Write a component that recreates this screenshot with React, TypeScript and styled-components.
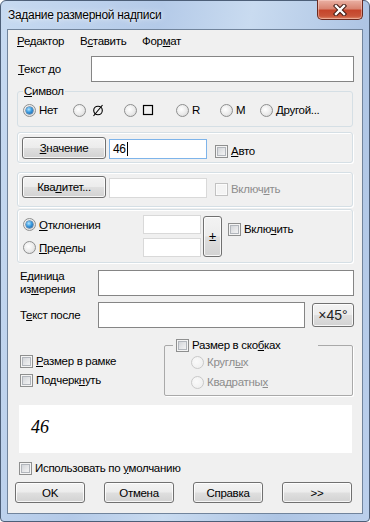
import React, { FC, ReactNode } from 'react';
import styled, { createGlobalStyle } from 'styled-components';

const FONT = `"Liberation Sans", Arial, sans-serif`;

const GlobalStyle = createGlobalStyle`
  html, body {
    margin: 0;
    padding: 0;
    background: #fff;
  }
  body {
    font-family: ${FONT};
    font-size: 11.5px;
    letter-spacing: -0.3px;
    color: #000;
  }
  * {
    box-sizing: border-box;
  }
`;

const Window = styled.div`
  width: 370px;
  height: 522px;
  display: flex;
  flex-direction: column;
  border: 1px solid #4d5f78;
  border-radius: 6px 6px 4px 4px;
  padding: 0 6px 7px 6px;
  background: linear-gradient(100deg, #c7daf1 0%, #b4cae8 35%, #c9dbf0 55%, #aec5e4 80%, #bcd0ec 100%);
`;

const TitleBar = styled.div`
  height: 28px;
  display: flex;
  align-items: flex-start;
  justify-content: space-between;
`;

const Title = styled.div`
  margin: 6px 0 0 1px;
  line-height: 16px;
  font-size: 12px;
  text-shadow: 0 0 6px rgba(255, 255, 255, 0.9), 0 0 2px rgba(255, 255, 255, 0.9);
`;

const CloseButton = styled.div`
  width: 46px;
  height: 20px;
  margin-top: -1px;
  display: flex;
  align-items: center;
  justify-content: center;
  border: 1px solid #6b2a1f;
  border-top: none;
  border-radius: 0 0 5px 5px;
  background: linear-gradient(to bottom, #eab1a4 0%, #d98572 45%, #c5452b 55%, #c9553a 85%, #e08a6a 100%);
  box-shadow: inset 0 0 0 1px rgba(255, 220, 210, 0.45);
`;

const Client = styled.div`
  flex: 1;
  display: flex;
  flex-direction: column;
  border: 1px solid #71849c;
  background: #f0f0f0;
`;

const MenuBar = styled.div`
  height: 22px;
  display: flex;
  padding: 3px 0 0 9px;
  line-height: 16px;
`;

const MenuItem = styled.span<{ $w: number }>`
  width: ${p => p.$w}px;
`;

const Content = styled.div`
  display: flex;
  flex-direction: column;
  padding: 4px 9px 0 9px;
`;

const FieldRow = styled.div<{ $mt: number; $labelW: number }>`
  display: flex;
  align-items: center;
  margin-top: ${p => p.$mt}px;

  & > label {
    width: ${p => p.$labelW}px;
    flex: none;
    padding-left: ${p => (p.$labelW > 76 ? 3 : 1)}px;
    line-height: 13px;
  }
`;

const TextBox = styled.div<{ $tone?: 'dark' | 'focus' | 'light'; $h?: number; $w?: number }>`
  height: ${p => p.$h ?? 26}px;
  ${p => (p.$w ? `width: ${p.$w}px; flex: none;` : 'flex: 1;')}
  display: flex;
  align-items: center;
  padding-left: 3px;
  background: #fff;
  font-size: 12px;
  border: 1px solid
    ${p => (p.$tone === 'focus' ? '#7eb4ea' : p.$tone === 'light' ? '#d9d9d9' : '#858585')};
`;

const Caret = styled.span`
  width: 1px;
  height: 14px;
  margin-left: 1px;
  background: #000;
`;

const GroupBox = styled.fieldset<{ $mt: number }>`
  margin: ${p => p.$mt}px 0 0 0;
  padding: 4px 5px 8px 5px;
  min-inline-size: auto;
  border: 1px solid #d5dfe5;
  border-radius: 3px;

  & > legend {
    padding: 0 1px;
    line-height: 14px;
  }
`;

const Panel = styled.div<{ $mt: number; $pt: number; $pb: number }>`
  display: flex;
  align-items: flex-end;
  margin-top: ${p => p.$mt}px;
  padding: ${p => p.$pt}px 4px ${p => p.$pb}px 4px;
  border: 1px solid #d5dfe5;
  border-radius: 3px;
  box-shadow: inset 1px 1px 0 #fff, 1px 1px 0 #fff;
`;

const Button = styled.div<{ $w?: number; $h?: number; $size?: number }>`
  width: ${p => p.$w ?? 70}px;
  height: ${p => p.$h ?? 21}px;
  flex: none;
  display: flex;
  align-items: center;
  justify-content: center;
  font-size: ${p => p.$size ?? 11.5}px;
  border: 1px solid #707070;
  border-radius: 3px;
  background: linear-gradient(to bottom, #f3f3f3 0%, #ececec 48%, #dfdfdf 52%, #d2d2d2 100%);
  box-shadow: inset 0 0 0 1px rgba(255, 255, 255, 0.8);
`;

const Option = styled.label<{ $w?: number; $disabled?: boolean }>`
  display: flex;
  align-items: center;
  height: 16px;
  ${p => (p.$w ? `width: ${p.$w}px; flex: none;` : '')}
  color: ${p => (p.$disabled ? '#8d8d8d' : '#000')};
`;

const RadioMark = styled.span<{ $checked?: boolean; $disabled?: boolean }>`
  position: relative;
  flex: none;
  width: 13px;
  height: 13px;
  margin-right: 3px;
  border-radius: 50%;
  border: 1px solid ${p => (p.$disabled ? '#c9c9c9' : '#8e8f8f')};
  background: ${p =>
    p.$disabled
      ? 'radial-gradient(circle at 40% 40%, #fafafa 0%, #ececec 100%)'
      : 'radial-gradient(circle at 40% 40%, #ffffff 0%, #eaeaea 55%, #cfcfcf 100%)'};

  &::after {
    content: '';
    display: ${p => (p.$checked ? 'block' : 'none')};
    position: absolute;
    left: 2px;
    top: 2px;
    width: 7px;
    height: 7px;
    border-radius: 50%;
    background: radial-gradient(circle at 40% 35%, #b6e6ff 0%, #3a9be0 45%, #0f4f96 100%);
    box-shadow: 0 0 0 0.5px #1c4f80;
  }
`;

const CheckMark = styled.span<{ $disabled?: boolean }>`
  flex: none;
  width: 13px;
  height: 13px;
  margin-right: 3px;
  border: 1px solid ${p => (p.$disabled ? '#c2c2c2' : '#8e8f8f')};
  background: ${p =>
    p.$disabled ? '#f4f4f4' : 'linear-gradient(135deg, #c9cdd2 0%, #e6e7e9 55%, #fafafa 100%)'};
  box-shadow: ${p =>
    p.$disabled ? 'inset 0 0 0 1px #fbfbfb' : 'inset 0 0 0 1px #f4f4f4, inset 0 0 0 2px #b2b6bc'};
`;

const SymbolRow = styled.div`
  display: flex;
  align-items: center;
`;

const DevGrid = styled.div`
  display: grid;
  grid-template-columns: 120px 58px 21px auto;
  grid-template-rows: 19px 19px;
  row-gap: 4px;
  align-items: center;
`;

const PlusMinus = styled(Button)`
  grid-column: 3;
  grid-row: 1 / span 2;
  align-self: stretch;
  margin: 1px 0 0 2px;
  font-size: 13px;
`;

const DevCheck = styled.div`
  grid-column: 4;
  grid-row: 1;
  align-self: start;
  margin: 6px 0 0 6px;
`;

const LowerSection = styled.div`
  display: flex;
  margin-top: 9px;
`;

const LeftChecks = styled.div`
  width: 147px;
  flex: none;
  display: flex;
  flex-direction: column;
  gap: 3px;
  padding: 16px 0 0 3px;
`;

const BracketBox = styled.fieldset`
  flex: 1;
  margin: 0;
  padding: 1px 0 5px 8px;
  min-inline-size: auto;
  border: 1px solid #a9a9a9;
  border-radius: 2px;
  box-shadow: 1px 1px 0 #fff;

  & > legend {
    display: block;
    padding: 0 3px;
  }
`;

const BracketOptions = styled.div`
  display: flex;
  flex-direction: column;
  gap: 4px;
  margin-left: 18px;
`;

const Preview = styled.div`
  height: 48px;
  margin: 9px 1px 0 2px;
  display: flex;
  align-items: center;
  padding: 0 0 4px 12px;
  background: #fff;
  font-family: "Liberation Serif", "Times New Roman", serif;
  font-style: italic;
  font-size: 18px;
  letter-spacing: 0;
`;

const ButtonBar = styled.div`
  display: flex;
  gap: 19px;
  margin: 6px 0 0 -2px;
`;

const Radio: FC<{ checked?: boolean; disabled?: boolean; w?: number; children: ReactNode }> = ({
  checked,
  disabled,
  w,
  children
}) => (
  <Option $w={w} $disabled={disabled}>
    <RadioMark $checked={checked} $disabled={disabled} />
    {children}
  </Option>
);

const Check: FC<{ disabled?: boolean; w?: number; children: ReactNode }> = ({ disabled, w, children }) => (
  <Option $w={w} $disabled={disabled}>
    <CheckMark $disabled={disabled} />
    {children}
  </Option>
);

const CloseGlyph = () => (
  <svg width="14" height="12" viewBox="0 0 14 12">
    <path d="M3 2 L11 10 M11 2 L3 10" stroke="#3e1710" strokeWidth="4.4" strokeLinecap="square" />
    <path d="M3 2 L11 10 M11 2 L3 10" stroke="#fff" strokeWidth="2.4" strokeLinecap="square" />
  </svg>
);

const DiameterGlyph = () => (
  <svg width="14" height="13" viewBox="0 0 14 13" style={{ marginLeft: 2 }}>
    <circle cx="7" cy="6.5" r="4.3" fill="none" stroke="#000" strokeWidth="1.1" />
    <path d="M2.5 12 L11.5 1" stroke="#000" strokeWidth="1.1" />
  </svg>
);

const SquareGlyph = () => (
  <svg width="12" height="12" viewBox="0 0 12 12" style={{ marginLeft: 2 }}>
    <rect x="1.5" y="1.5" width="9" height="9" fill="none" stroke="#000" strokeWidth="1.2" />
  </svg>
);

export default function App() {
  return (
    <>
      <GlobalStyle />
      <Window>
        <TitleBar>
          <Title>Задание размерной надписи</Title>
          <CloseButton>
            <CloseGlyph />
          </CloseButton>
        </TitleBar>
        <Client>
          <MenuBar>
            <MenuItem $w={63}>
              <u>Р</u>едактор
            </MenuItem>
            <MenuItem $w={62}>
              В<u>с</u>тавить
            </MenuItem>
            <MenuItem $w={60}>
              Фор<u>м</u>ат
            </MenuItem>
          </MenuBar>

          <Content>
            <FieldRow $mt={0} $labelW={74}>
              <label>
                <u>Т</u>екст до
              </label>
              <TextBox style={{ marginRight: -1 }} />
            </FieldRow>

            <GroupBox $mt={2}>
              <legend>
                <u>С</u>имвол
              </legend>
              <SymbolRow>
                <Radio checked w={50}>
                  Нет
                </Radio>
                <Radio w={51}>
                  <DiameterGlyph />
                </Radio>
                <Radio w={52}>
                  <SquareGlyph />
                </Radio>
                <Radio w={44}>R</Radio>
                <Radio w={40}>M</Radio>
                <Radio>Другой...</Radio>
              </SymbolRow>
            </GroupBox>

            <Panel $mt={5} $pt={4} $pb={3}>
              <Button $w={84} $h={22}>
                <span>
                  <u>З</u>начение
                </span>
              </Button>
              <TextBox $tone="focus" $w={98} $h={20} style={{ marginLeft: 3 }}>
                46
                <Caret />
              </TextBox>
              <div style={{ marginLeft: 8 }}>
                <Check>
                  <span>
                    <u>А</u>вто
                  </span>
                </Check>
              </div>
            </Panel>

            <Panel $mt={9} $pt={3} $pb={8}>
              <Button $w={84} $h={22}>
                <span>
                  Ква<u>л</u>итет...
                </span>
              </Button>
              <TextBox $tone="light" $w={98} $h={20} style={{ marginLeft: 3 }} />
              <div style={{ marginLeft: 8, marginBottom: 1 }}>
                <Check disabled>
                  <span>
                    Включ<u>и</u>ть
                  </span>
                </Check>
              </div>
            </Panel>

            <Panel $mt={2} $pt={5} $pb={5} style={{ alignItems: 'stretch' }}>
              <DevGrid style={{ marginLeft: 1 }}>
                <Radio checked>
                  <span>
                    <u>О</u>тклонения
                  </span>
                </Radio>
                <TextBox $tone="light" $h={19} />
                <PlusMinus $w={19} $h={41}>
                  ±
                </PlusMinus>
                <DevCheck>
                  <Check>
                    <span>
                      Вклю<u>ч</u>ить
                    </span>
                  </Check>
                </DevCheck>
                <Radio>
                  <span>
                    <u>П</u>ределы
                  </span>
                </Radio>
                <TextBox $tone="light" $h={19} />
              </DevGrid>
            </Panel>

            <FieldRow $mt={7} $labelW={81}>
              <label>
                Единица
                <br />
                из<u>м</u>ерения
              </label>
              <TextBox style={{ marginRight: -1 }} />
            </FieldRow>

            <FieldRow $mt={6} $labelW={81}>
              <label>
                Т<u>е</u>кст после
              </label>
              <TextBox />
              <Button $w={42} $h={24} $size={14} style={{ marginLeft: 7, marginRight: -1, color: '#222', letterSpacing: 0 }}>
                ×45°
              </Button>
            </FieldRow>

            <LowerSection>
              <LeftChecks>
                <Check>
                  <span>
                    <u>Р</u>азмер в рамке
                  </span>
                </Check>
                <Check>
                  <span>
                    Подчерк<u>н</u>уть
                  </span>
                </Check>
              </LeftChecks>
              <BracketBox>
                <legend>
                  <Check w={139}>
                    <span>
                      Размер в ско<u>б</u>ках
                    </span>
                  </Check>
                </legend>
                <BracketOptions>
                  <Radio disabled>
                    <span>
                      Кругл<u>ы</u>х
                    </span>
                  </Radio>
                  <Radio disabled>
                    <span>
                      Квадратны<u>х</u>
                    </span>
                  </Radio>
                </BracketOptions>
              </BracketBox>
            </LowerSection>

            <Preview>46</Preview>

            <div style={{ margin: '7px 0 0 2px' }}>
              <Check>
                <span>
                  Использовать по <u>у</u>молчанию
                </span>
              </Check>
            </div>

            <ButtonBar>
              <Button>OK</Button>
              <Button>Отмена</Button>
              <Button>Справка</Button>
              <Button>&gt;&gt;</Button>
            </ButtonBar>
          </Content>
        </Client>
      </Window>
    </>
  );
}
